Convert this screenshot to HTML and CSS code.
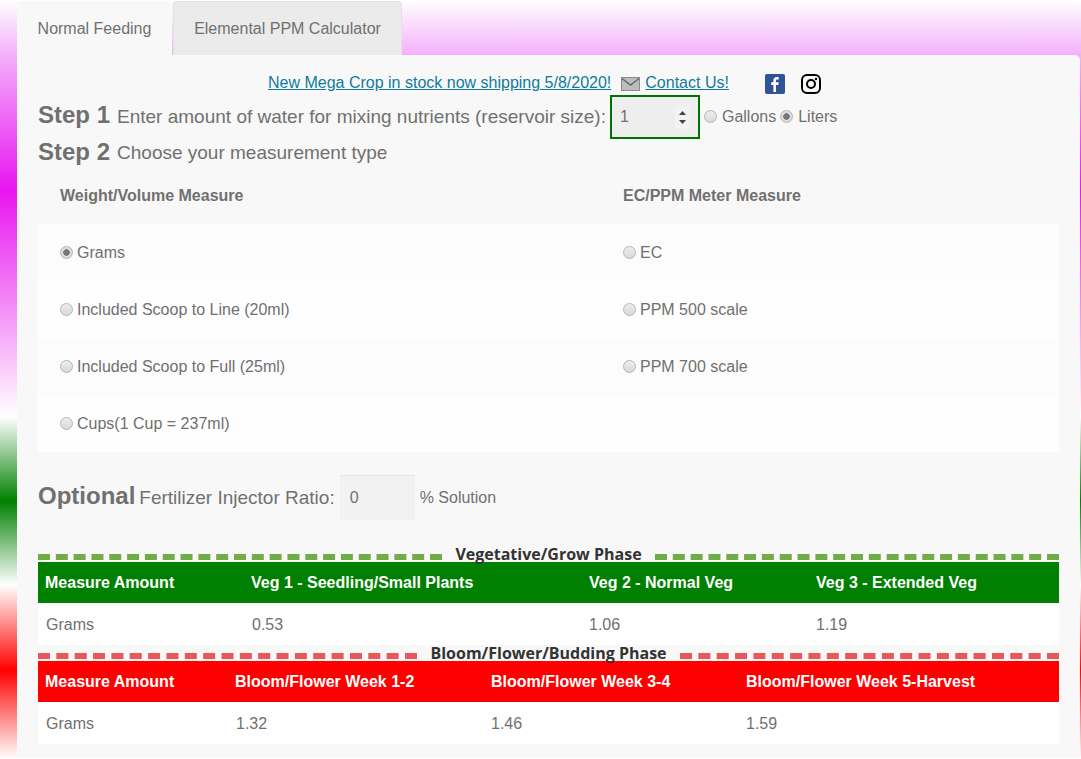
FILE: index.html
```html
<!DOCTYPE html>
<html lang="en">
<head>
<meta charset="utf-8">
<title>Nutrient Calculator</title>
<link rel="stylesheet" href="styles.css">
</head>
<body>
<div class="tabs">
  <div class="tab tab-active">Normal Feeding</div>
  <div class="tab">Elemental PPM Calculator</div>
</div>
<main class="panel">
  <div class="news">
    <a href="#">New Mega Crop in stock now shipping 5/8/2020!</a>
    <svg class="mail" width="19" height="14" viewBox="0 0 19 14"><rect x="0.5" y="0.5" width="18" height="13" fill="#bcbcbc" stroke="#8a8a8a"/><path d="M1 1.500l8.500 6.500L18 1.500" fill="none" stroke="#666" stroke-width="1.400"/></svg>
    <a href="#">Contact Us!</a>
    <svg class="fb" width="20" height="20" viewBox="0 0 20 20"><rect width="20" height="20" rx="2" fill="#2f5597"/><path d="M11 18v-7h2.300l.4-2.700H11V6.900c0-.8.3-1.300 1.400-1.300h1.300V3.200c-.3 0-1.100-.1-2-.1-2 0-3.300 1.200-3.300 3.400v1.800H6.200V11h2.200v7z" fill="#fff"/></svg>
    <svg class="ig" width="20" height="20" viewBox="0 0 20 20"><rect x="1" y="1" width="18" height="18" rx="5" fill="none" stroke="#000" stroke-width="2"/><circle cx="10" cy="10" r="4" fill="none" stroke="#000" stroke-width="2"/><circle cx="15" cy="5" r="1.200" fill="#000"/></svg>
  </div>
  <div class="step step-one">
    <strong class="big">Step 1</strong>
    <span class="lead">Enter amount of water for mixing nutrients (reservoir size):</span>
    <span class="number-box"><span>1</span><svg class="spin" width="15" height="23" viewBox="0 0 15 23"><rect width="15" height="23" fill="#f2f2f2"/><path d="M7.500 5l3.500 4H4zM7.500 18l-3.500-4h7z" fill="#444"/></svg></span>
    <label class="unit"><span class="radio"></span>Gallons</label>
    <label class="unit"><span class="radio radio-on"></span>Liters</label>
  </div>
  <div class="step step-two">
    <strong class="big">Step 2</strong>
    <span class="lead">Choose your measurement type</span>
  </div>
  <div class="options">
    <div class="row head"><div class="cell">Weight/Volume Measure</div><div class="cell">EC/PPM Meter Measure</div></div>
    <div class="row alt"><div class="cell"><span class="radio radio-on"></span>Grams</div><div class="cell"><span class="radio"></span>EC</div></div>
    <div class="row"><div class="cell"><span class="radio"></span>Included Scoop to Line (20ml)</div><div class="cell"><span class="radio"></span>PPM 500 scale</div></div>
    <div class="row alt"><div class="cell"><span class="radio"></span>Included Scoop to Full (25ml)</div><div class="cell"><span class="radio"></span>PPM 700 scale</div></div>
    <div class="row"><div class="cell"><span class="radio"></span>Cups(1 Cup = 237ml)</div><div class="cell"></div></div>
  </div>
  <div class="optional">
    <strong class="big">Optional</strong>
    <span class="lead-small">Fertilizer Injector Ratio:</span>
    <span class="ratio">0</span>
    <span class="solution">% Solution</span>
  </div>
  <div class="phase phase-veg">
    <div class="phase-title"><span>Vegetative/Grow Phase</span></div>
    <div class="grid grid-veg grid-head"><div>Measure Amount</div><div>Veg 1 - Seedling/Small Plants</div><div>Veg 2 - Normal Veg</div><div>Veg 3 - Extended Veg</div></div>
    <div class="grid grid-veg grid-body"><div>Grams</div><div>0.53</div><div>1.06</div><div>1.19</div></div>
  </div>
  <div class="phase phase-bloom">
    <div class="phase-title"><span>Bloom/Flower/Budding Phase</span></div>
    <div class="grid grid-bloom grid-head"><div>Measure Amount</div><div>Bloom/Flower Week 1-2</div><div>Bloom/Flower Week 3-4</div><div>Bloom/Flower Week 5-Harvest</div></div>
    <div class="grid grid-bloom grid-body"><div>Grams</div><div>1.32</div><div>1.46</div><div>1.59</div></div>
  </div>
</main>
</body>
</html>
```
FILE: styles.css
```css
* { box-sizing: border-box; }
html, body { margin: 0; height: 759px; overflow: hidden; }
body {
  padding: 1px 0 0 17px;
  font-family: "Liberation Sans", Arial, sans-serif;
  font-size: 16px;
  color: #707070;
  background: linear-gradient(to bottom,
    #fff 0, #f4b4fb 52px, #e815f0 190px, #fff 417px,
    #008000 501px, #fff 585px, #ff0000 670px, #fff 759px);
}
.tabs { display: flex; height: 54px; }
.tab { width: 229px; margin-left: 1px; padding-top: 18px; text-align: center; background: #ebebeb; border: 1px solid #e2e2e2; border-bottom: 0; border-radius: 4px 4px 0 0; }
.tab-active { width: 155px; margin-left: 0; background: #f8f8f8; border-color: #f8f8f8; }
.panel { width: 1063px; height: 703px; padding: 17px 21px 0; background: #f8f8f8; border-radius: 0 5px 5px 5px; }
.news { display: flex; align-items: center; height: 22px; padding-left: 230px; }
.news a { color: #0f7c9f; }
.mail { margin: 2px 5px 0 10px; }
.fb { margin: 2px 0 0 36px; }
.ig { margin: 2px 0 0 16px; }
.big { font-size: 24px; color: #707070; margin-bottom: 4px; }
.step-two .big { margin-bottom: 2px; }
.lead { font-size: 19px; }
.step { display: flex; align-items: center; }
.step-one { height: 44px; margin-top: 1px; gap: 5px; }
.step-two { height: 28px; gap: 7px; }
.step-one .lead { margin-left: 2px; }
.number-box { display: flex; align-items: center; justify-content: space-between; width: 90px; height: 44px; margin-left: -1px; padding: 0 8px; border: 2px solid #007000; background: #eeeeee; }
.unit { display: flex; align-items: center; margin-left: -1px; }
.radio { display: inline-block; width: 13px; height: 13px; margin: -1px 5px 0 0; border-radius: 50%; border: 1px solid #b5b5b5; background: linear-gradient(#eee, #d8d8d8); flex: none; }
.cell .radio { margin-right: 4px; }
.radio-on { background: radial-gradient(circle, #777 0 3px, #ddd 3.500px); }
.row { display: grid; grid-template-columns: 563px 1fr; height: 57px; align-items: center; background: #fefefe; }
.row.alt { background: #fcfcfc; }
.row.head { background: transparent; font-weight: bold; }
.cell { padding-left: 22px; display: flex; align-items: center; }
.optional { display: flex; align-items: center; height: 45px; margin-top: 23px; }
.lead-small { font-size: 19px; margin-left: 4px; }
.ratio { width: 75px; height: 45px; margin-left: 5px; padding: 13px 0 0 10px; background: #f2f2f2; border-top: 1px solid #e6e6e6; }
.solution { margin-left: 5px; }
.phase-title { display: flex; align-items: flex-start; gap: 13px; height: 16px; font-family: "Open Sans", sans-serif; font-size: 16px; font-weight: bold; color: #333; }
.phase-title::before, .phase-title::after { content: ""; flex: 1; margin-top: 8px; border-top: 6px dashed #70ad47; }
.phase-bloom .phase-title::before, .phase-bloom .phase-title::after { border-top-color: #e85858; }
.phase-title span { line-height: 16px; }
.phase-veg { margin-top: 26px; }
.grid { display: grid; align-items: center; padding-left: 8px; }
.grid-veg { grid-template-columns: 206px 337px 227px 1fr; }
.grid-bloom { grid-template-columns: 190px 255px 255px 1fr; }
.grid-head { height: 41px; padding-left: 7px; color: #fff; font-weight: bold; }
.grid-veg.grid-head { grid-template-columns: 206px 338px 227px 1fr; }
.grid-bloom.grid-head { grid-template-columns: 190px 256px 255px 1fr; }
.phase-veg .grid-head { background: #008000; }
.phase-bloom .grid-head { background: #ff0000; }
.grid-body { height: 42px; padding-top: 2px; background: #fff; }
```
